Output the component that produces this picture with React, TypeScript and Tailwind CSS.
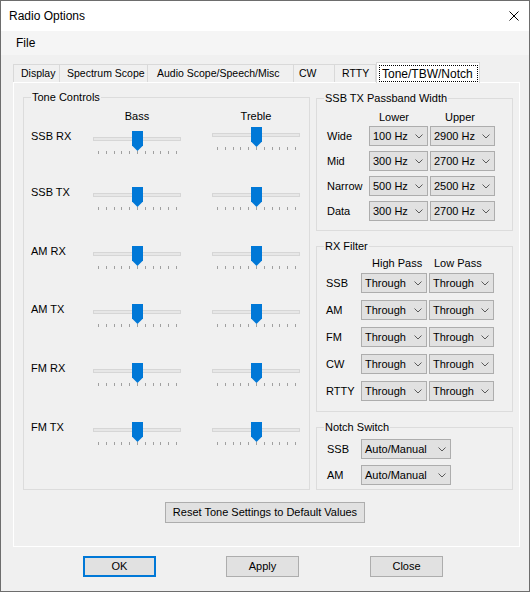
import type React from "react"

const tabs = [
  { label: "Display", cls: "w-[47px] pl-[7px] border-l" },
  { label: "Spectrum Scope", cls: "w-[88px] pl-[7px]" },
  { label: "Audio Scope/Speech/Misc", cls: "w-[146px] pl-[9px]" },
  { label: "CW", cls: "w-[41px] pl-[5px]" },
  { label: "RTTY", cls: "w-[41px] pl-[7px]" },
]

const toneRows = [
  { label: "SSB RX", h: "h-[56px]", up: true },
  { label: "SSB TX", h: "h-[59px]", up: false },
  { label: "AM RX", h: "h-[58px]", up: false },
  { label: "AM TX", h: "h-[59px]", up: false },
  { label: "FM RX", h: "h-[59px]", up: false },
  { label: "FM TX", h: "h-[40px]", up: false },
]

const passband = [
  { label: "Wide", lower: "100 Hz", upper: "2900 Hz" },
  { label: "Mid", lower: "300 Hz", upper: "2700 Hz" },
  { label: "Narrow", lower: "500 Hz", upper: "2500 Hz" },
  { label: "Data", lower: "300 Hz", upper: "2700 Hz" },
]

const rxFilter = ["SSB", "AM", "FM", "CW", "RTTY"]

function Chevron() {
  return (
    <svg width="8" height="5" viewBox="0 0 8 5">
      <polyline points="0.5,0.5 4,4 7.5,0.5" fill="none" stroke="#5a5a5a" strokeWidth="1" />
    </svg>
  )
}

function Combo({ value, className }: { value: string; className: string }) {
  return (
    <div
      className={`flex h-[20px] items-center justify-between border border-[#adadad] bg-[#e1e1e1] pl-[3px] pr-[4px] ${className}`}
    >
      <span>{value}</span>
      <Chevron />
    </div>
  )
}

function Slider({ className = "" }: { className?: string }) {
  return (
    <div className={`relative h-[24px] w-[88px] ${className}`}>
      <div className="absolute left-0 right-0 top-[6px] h-[4px] border border-[#d6d6d6] bg-[#e7e7e7]" />
      <svg className="absolute left-[39px] top-0" width="11" height="20" viewBox="0 0 11 20">
        <path d="M0 0H11V14.5L5.5 20L0 14.5Z" fill="#0078d7" />
      </svg>
      <div className="absolute left-[5px] top-[20px] flex w-[79px] justify-between">
        {Array.from({ length: 11 }).map((_, i) => (
          <div key={i} className="h-[3px] w-px bg-[#a0a0a0]" />
        ))}
      </div>
    </div>
  )
}

function GroupBox({ label, className, children }: { label: string; className: string; children?: React.ReactNode }) {
  return (
    <div className={`relative border border-[#dcdcdc] ${className}`}>
      <span className="absolute -top-[7px] left-[7px] bg-[#f0f0f0] px-px leading-[13px]">{label}</span>
      {children}
    </div>
  )
}

function Button({ label, className }: { label: string; className: string }) {
  return (
    <div className={`flex h-[21px] items-center justify-center bg-[#e1e1e1] ${className}`}>{label}</div>
  )
}

export default function App() {
  return (
    <div className="flex h-[592px] w-[530px] flex-col border border-[#6d6d6d] bg-[#f0f0f0] font-['Liberation_Sans',Arial,sans-serif] text-[11px] text-black">
      {/* title bar */}
      <div className="flex h-[30px] items-center justify-between bg-white pl-[8px]">
        <span className="text-[12px]">Radio Options</span>
        <svg className="mr-[10px]" width="10" height="10" viewBox="0 0 10 10">
          <path d="M0.5 0.5L9.5 9.5M9.5 0.5L0.5 9.5" stroke="#000" strokeWidth="1" />
        </svg>
      </div>

      {/* menu */}
      <div className="flex h-[24px] items-center bg-[#f5f5f5] pl-[15px] text-[12px]">File</div>

      {/* tabs */}
      <div className="ml-[12px] mt-[7px] flex h-[20px] items-end text-[10.5px]">
        {tabs.map((t) => (
          <div
            key={t.label}
            className={`flex h-[18px] shrink-0 items-center whitespace-nowrap border-t border-r border-[#d9d9d9] bg-[#f0f0f0] ${t.cls}`}
          >
            {t.label}
          </div>
        ))}
        <div className="relative z-10 -mb-px h-[21px] w-[104px] shrink-0 border-x border-t border-[#d9d9d9] bg-white pt-[2px]">
          <div className="ml-[2px] flex h-[17px] w-[99px] items-center whitespace-nowrap border border-dotted border-black pl-[2px] text-[12px]">
            Tone/TBW/Notch
          </div>
        </div>
      </div>

      {/* tab page */}
      <div className="ml-[12px] flex h-[465px] w-[507px] flex-col border border-white">
        <div className="flex pl-[9px] pt-[14px]">
          <GroupBox label="Tone Controls" className="h-[393px] w-[287px]">
            <div className="flex flex-col">
              <div className="mt-[12px] flex h-[13px] leading-[13px]">
                <div className="w-[69px]" />
                <div className="w-[88px] text-center">Bass</div>
                <div className="w-[31px]" />
                <div className="w-[88px] text-center">Treble</div>
              </div>
              <div className="mt-[8px] flex flex-col">
                {toneRows.map((r) => (
                  <div key={r.label} className={`flex items-start ${r.h}`}>
                    <div className="-mt-[1px] w-[69px] pl-[7px] leading-[13px]">{r.label}</div>
                    <Slider />
                    <Slider className={r.up ? "ml-[31px] -mt-[4px]" : "ml-[31px]"} />
                  </div>
                ))}
              </div>
            </div>
          </GroupBox>

          <div className="ml-[6px] flex w-[197px] flex-col">
            <GroupBox label="SSB TX Passband Width" className="mt-[1px] h-[133px]">
              <div className="mt-[12px] flex h-[13px] leading-[13px]">
                <div className="w-[52px]" />
                <div className="w-[59px] pl-[10px]">Lower</div>
                <div className="ml-[2px] w-[65px] pl-[15px]">Upper</div>
              </div>
              <div className="mt-[2px] flex flex-col gap-[5px]">
                {passband.map((p) => (
                  <div key={p.label} className="flex items-center">
                    <div className="w-[52px] pl-[10px]">{p.label}</div>
                    <Combo value={p.lower} className="w-[59px]" />
                    <Combo value={p.upper} className="ml-[2px] w-[65px]" />
                  </div>
                ))}
              </div>
            </GroupBox>

            <GroupBox label="RX Filter" className="mt-[15px] h-[166px]">
              <div className="mt-[10px] flex h-[13px] leading-[13px]">
                <div className="w-[44px]" />
                <div className="w-[66px] pl-[11px]">High Pass</div>
                <div className="ml-[2px] w-[65px] pl-[5px]">Low Pass</div>
              </div>
              <div className="mt-[3px] flex flex-col gap-[7px]">
                {rxFilter.map((m) => (
                  <div key={m} className="flex items-center">
                    <div className="w-[44px] pl-[9px]">{m}</div>
                    <Combo value="Through" className="w-[66px]" />
                    <Combo value="Through" className="ml-[2px] w-[65px]" />
                  </div>
                ))}
              </div>
            </GroupBox>

            <GroupBox label="Notch Switch" className="mt-[15px] h-[63px]">
              <div className="mt-[11px] flex flex-col gap-[6px]">
                {["SSB", "AM"].map((m) => (
                  <div key={m} className="flex items-center">
                    <div className="w-[44px] pl-[10px]">{m}</div>
                    <Combo value="Auto/Manual" className="w-[90px]" />
                  </div>
                ))}
              </div>
            </GroupBox>
          </div>
        </div>

        <Button
          label="Reset Tone Settings to Default Values"
          className="ml-[151px] mt-[12px] w-[200px] border border-[#adadad]"
        />
      </div>

      {/* dialog buttons */}
      <div className="mt-[9px] flex pl-[82px]">
        <Button label="OK" className="w-[73px] border-2 border-[#0078d7]" />
        <Button label="Apply" className="ml-[70px] w-[73px] border border-[#adadad]" />
        <Button label="Close" className="ml-[71px] w-[73px] border border-[#adadad]" />
      </div>
    </div>
  )
}
